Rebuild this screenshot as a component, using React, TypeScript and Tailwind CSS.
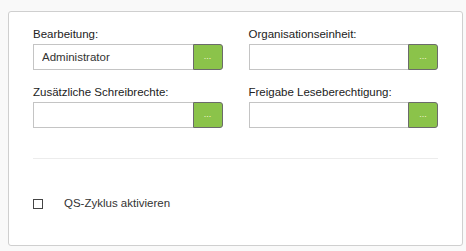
import * as React from 'react'

const fields = [
  { label: 'Bearbeitung:', value: 'Administrator' },
  { label: 'Organisationseinheit:', value: '' },
  { label: 'Zusätzliche Schreibrechte:', value: '' },
  { label: 'Freigabe Leseberechtigung:', value: '' },
]

function PickerField({ label, value }: { label: string; value: string }) {
  return (
    <div className="flex flex-col">
      <label className="text-[11.5px] leading-[14px] text-[#222] mb-[3px]">{label}</label>
      <div className="flex h-[26px]">
        <input
          readOnly
          value={value}
          className="flex-1 min-w-0 h-full border border-[#c4c4c4] border-r-0 bg-white px-[8px] text-[11.5px] text-[#333] outline-none"
        />
        <button className="w-[30px] h-full bg-[#8bc34a] border border-[#6b6b6b] rounded-r-[3px] flex items-center justify-center text-[#f4f8d0] text-[9px] leading-none pb-[1px]">
          ...
        </button>
      </div>
    </div>
  )
}

export default function App() {
  return (
    <div className="w-[466px] h-[251px] bg-[#f9f9f9] pt-[11px] pl-[8px] font-['Liberation_Sans',Arial,sans-serif]">
      <div className="w-[455px] h-[235px] bg-white border border-[#cfcfcf] rounded-[3px] px-[24px] pt-[15px]">
        <div className="grid grid-cols-2 gap-x-[26px] gap-y-[15px] w-[405px]">
          {fields.map((f) => (
            <PickerField key={f.label} label={f.label} value={f.value} />
          ))}
        </div>

        <div className="w-[405px] h-px bg-[#ececec] mt-[30px]" />

        <label className="flex items-center h-[14px] mt-[38px] text-[11.5px] text-[#333]">
          <span className="w-[10px] h-[10px] border border-[#444] bg-white" />
          <span className="ml-[21px]">QS-Zyklus aktivieren</span>
        </label>
      </div>
    </div>
  )
}
